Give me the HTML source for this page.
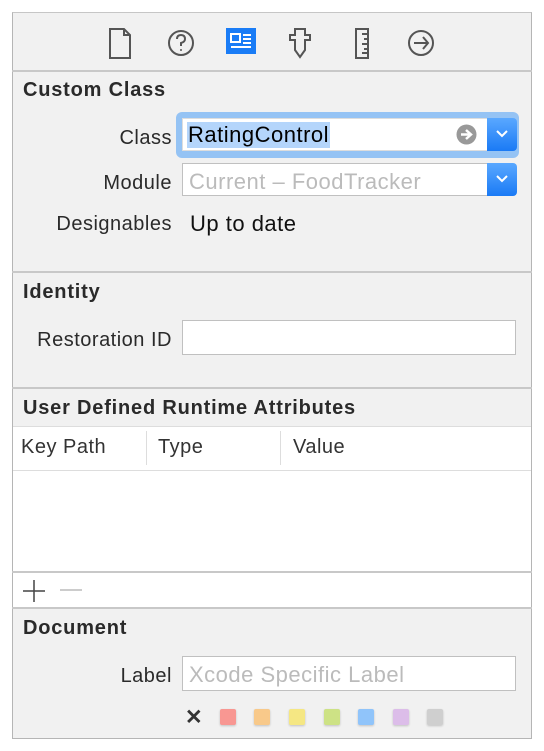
<!DOCTYPE html>
<html><head><style>
*{margin:0;padding:0;box-sizing:border-box}
body{width:544px;height:751px;background:#fff;font-family:"Liberation Sans",sans-serif;position:relative;overflow:hidden}
.a{position:absolute}
.panel{left:12px;top:12px;width:520px;height:727px;background:#f1f1f1;border:1px solid #b5b5b5;border-top-color:#c6c6c6}
.hr{position:absolute;left:12px;width:520px;height:2px;background:#c8c8c8}
.h{position:absolute;left:23px;font-weight:bold;font-size:20px;letter-spacing:0.8px;color:#2a2a2a}
.lbl{position:absolute;font-size:20px;letter-spacing:0.5px;color:#2a2a2a;text-align:right;right:372px}
.fld{position:absolute;background:#fff;border:1px solid #c0c0c0}
.ft{position:absolute;font-size:22px;letter-spacing:0.5px}
.btn{position:absolute;background:linear-gradient(#5aa8ff,#1a7af5);border-radius:0 4px 4px 0}
.sw{position:absolute;top:709px;width:16px;height:16px;border-radius:2px;box-shadow:0 1px 2px rgba(0,0,0,.2)}
.th{position:absolute;top:436px;font-size:20px;letter-spacing:0.5px;color:#333}
</style></head><body>
<div class="a panel"></div>
<div class="hr" style="top:70px"></div>
<svg class="a" style="left:100px;top:25px" width="350" height="35" viewBox="0 0 350 35" fill="none" stroke="#555" stroke-width="2">
<path d="M10 4 H24 L30 10 V33 H10 Z M24 4 V10 H30"/>
<circle cx="81" cy="18" r="12"/>
<path d="M77 14 Q77 10 81 10 Q85 10 85 14 Q85 17 81 18 V21"/><circle cx="81" cy="25" r="1" fill="#555" stroke="none"/>
<rect x="126" y="3" width="30" height="26" fill="#1a7cf6" stroke="none"/>
<rect x="131" y="9" width="9" height="8" stroke="#fff"/>
<path d="M143 10 H151 M143 14 H151 M143 18 H151 M131 22 H151" stroke="#fff"/>
<path d="M195 4 H205 V10 H210 V15 H205 V25 L200 32 L195 25 V15 H190 V10 H195 Z"/>
<path d="M256 4 H268 V33 H256 Z M262 9 H268 M264 14 H268 M262 19 H268 M264 24 H268 M262 28 H268"/>
<circle cx="321" cy="18" r="12"/><path d="M314 18 H328 M323 12 L328 18 L323 24"/>
</svg>
<div class="h" style="top:79px">Custom Class</div>
<div class="lbl" style="top:127px">Class</div>
<div class="a" style="left:176px;top:112px;width:343px;height:46px;background:#95c3f4;border-radius:6px"></div>
<div class="fld" style="left:182px;top:118px;width:306px;height:33px;border-color:#ddd"></div>
<div class="ft" style="left:187px;top:122px;background:#b4d5fb;color:#000;padding:0 1px;line-height:26px">RatingControl</div>
<svg class="a" style="left:456px;top:124px" width="21" height="21"><circle cx="10.5" cy="10.5" r="10" fill="#999"/><path d="M5 10.5 H14 M10 6 L15 10.5 L10 15" stroke="#fff" stroke-width="2.5" fill="none"/></svg>
<div class="btn" style="left:487px;top:118px;width:30px;height:33px"></div>
<svg class="a" style="left:494px;top:126px" width="16" height="16"><path d="M3 5 L8 10 L13 5" stroke="#fff" stroke-width="2" fill="none"/></svg>
<div class="lbl" style="top:172px">Module</div>
<div class="fld" style="left:182px;top:163px;width:308px;height:33px"></div>
<div class="ft" style="left:189px;top:169px;color:#bbb">Current – FoodTracker</div>
<div class="btn" style="left:487px;top:163px;width:30px;height:33px"></div>
<svg class="a" style="left:494px;top:171px" width="16" height="16"><path d="M3 5 L8 10 L13 5" stroke="#fff" stroke-width="2" fill="none"/></svg>
<div class="lbl" style="top:213px">Designables</div>
<div class="ft" style="left:190px;top:211px;color:#111">Up to date</div>
<div class="hr" style="top:271px"></div>
<div class="h" style="top:281px">Identity</div>
<div class="lbl" style="top:329px">Restoration ID</div>
<div class="fld" style="left:182px;top:320px;width:334px;height:35px"></div>
<div class="hr" style="top:387px"></div>
<div class="h" style="top:397px">User Defined Runtime Attributes</div>
<div class="a" style="left:13px;top:426px;width:518px;height:181px;background:#fff;border-top:1px solid #ddd"></div>
<div class="a" style="left:13px;top:470px;width:518px;height:1px;background:#ddd"></div>
<div class="a" style="left:146px;top:431px;width:1px;height:34px;background:#ddd"></div>
<div class="a" style="left:280px;top:431px;width:1px;height:34px;background:#ddd"></div>
<div class="th" style="left:21px">Key Path</div>
<div class="th" style="left:158px">Type</div>
<div class="th" style="left:293px">Value</div>
<div class="a" style="left:12px;top:571px;width:520px;height:2px;background:#c8c8c8"></div>
<svg class="a" style="left:20px;top:579px" width="70" height="24"><path d="M3 12 H25 M14 1 V23" stroke="#444" stroke-width="1.5"/><path d="M40 11 H62" stroke="#bbb" stroke-width="1.5"/></svg>
<div class="hr" style="top:607px"></div>
<div class="h" style="top:617px">Document</div>
<div class="lbl" style="top:665px">Label</div>
<div class="fld" style="left:182px;top:656px;width:334px;height:35px"></div>
<div class="ft" style="left:189px;top:662px;color:#bbb">Xcode Specific Label</div>
<div class="a" style="left:185px;top:705px;font-size:21px;font-weight:bold;color:#333">✕</div>
<div class="sw" style="left:220px;background:#f89792"></div>
<div class="sw" style="left:254px;background:#f8c98a"></div>
<div class="sw" style="left:289px;background:#f5e783"></div>
<div class="sw" style="left:324px;background:#cde285"></div>
<div class="sw" style="left:358px;background:#90c4fa"></div>
<div class="sw" style="left:393px;background:#dcbde9"></div>
<div class="sw" style="left:427px;background:#cfcfcf"></div>
</body></html>
